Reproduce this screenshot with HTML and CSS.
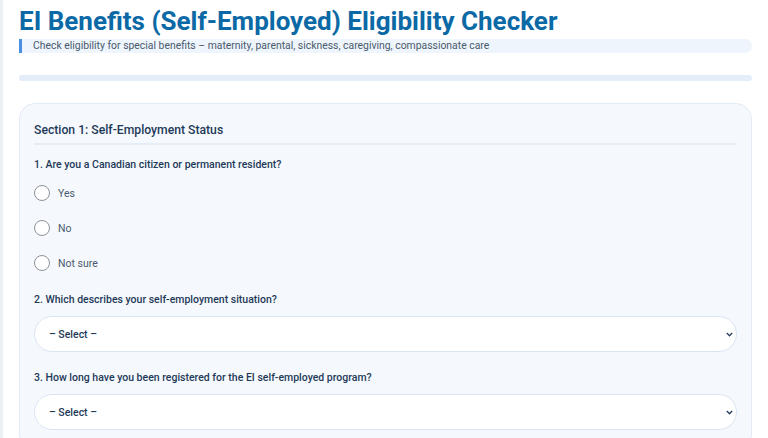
FILE: index.html
```html
<!DOCTYPE HTML>
<html>

<head>
    <meta charset="UTF-8">
    <title>EI Benefits (Self-Employed) Eligibility Checker</title>
    <link rel="stylesheet" href="styles.css">
</head>

<body>
    <div class="page">
        <h1 class="title">EI Benefits (Self-Employed) Eligibility Checker</h1>
        <p class="subtitle">Check eligibility for special benefits – maternity, parental, sickness, caregiving, compassionate care</p>

        <div class="progress"><div class="progress-fill" style="width: 0%"></div></div>

        <form class="card">
            <h2 class="section-title">Section 1: Self-Employment Status</h2>

            <div class="question">
                <label class="question-label">1. Are you a Canadian citizen or permanent resident?</label>
                <div class="options">
                    <label class="option"><input type="radio" name="resident" value="yes"><span>Yes</span></label>
                    <label class="option"><input type="radio" name="resident" value="no"><span>No</span></label>
                    <label class="option"><input type="radio" name="resident" value="unsure"><span>Not sure</span></label>
                </div>
            </div>

            <div class="question">
                <label class="question-label" for="situation">2. Which describes your self-employment situation?</label>
                <select id="situation" class="select">
                    <option>– Select –</option>
                    <option>Sole proprietor</option>
                    <option>Partner in a business</option>
                    <option>Incorporated, own more than 40% of shares</option>
                </select>
            </div>

            <div class="question">
                <label class="question-label" for="registered">3. How long have you been registered for the EI self-employed program?</label>
                <select id="registered" class="select">
                    <option>– Select –</option>
                    <option>Less than 12 months</option>
                    <option>12 months or more</option>
                </select>
            </div>
        </form>
    </div>
</body>

</html>
```

FILE: styles.css
```css
body {
    margin: 0;
    background-color: #eceff3;
    font-family: Roboto, "Noto Sans", Arial, sans-serif;
    color: #1f3a58;
}

.page {
    margin-left: 3px;
    min-height: 100vh;
    padding: 4px 16px 0 16px;
    background-color: #ffffff;
}

.title {
    margin: 0;
    font-size: 26px;
    line-height: 34px;
    font-weight: 700;
    color: #0b69a6;
}

.subtitle {
    margin: 1px 0 0 0;
    height: 14px;
    padding-left: 11px;
    border-left: 3px solid #4a90e2;
    border-radius: 0 7px 7px 0;
    background-color: #eef5fd;
    font-size: 10.4px;
    line-height: 14px;
    color: #4b5a6c;
}

.progress {
    margin-top: 22px;
    height: 6px;
    border-radius: 3px;
    background-color: #e4eefa;
    overflow: hidden;
}

.progress-fill {
    height: 100%;
    background-color: #4a90e2;
}

.card {
    margin-top: 22px;
    padding: 17px 14px 20px 14px;
    border: 1px solid #e2ebf5;
    border-radius: 16px;
    background-color: #f5f9fe;
}

.section-title {
    margin: 0;
    padding-bottom: 4px;
    border-bottom: 2px solid #e5edf6;
    font-size: 12.2px;
    line-height: 18px;
    font-weight: 500;
    color: #1f3a58;
}

.question {
    margin-top: 18px;
}

.question:first-of-type {
    margin-top: 12px;
}

.question-label {
    display: block;
    font-size: 10.5px;
    line-height: 16px;
    font-weight: 500;
    color: #1f3a58;
}

.options {
    margin-top: 12px;
    margin-bottom: 21px;
    display: flex;
    flex-direction: column;
    gap: 19px;
}

.option {
    display: flex;
    align-items: center;
    gap: 8px;
    height: 16px;
    font-size: 10.5px;
    color: #4b5a6c;
}

.option input {
    appearance: none;
    margin: 0;
    width: 16px;
    height: 16px;
    border: 1.5px solid #8c9299;
    border-radius: 50%;
    background-color: #ffffff;
}

/* pill select with a small chevron drawn as background */
.select {
    display: block;
    margin-top: 8px;
    width: 100%;
    height: 36px;
    padding: 0 16px 0 14px;
    appearance: none;
    border: 1.5px solid #d9e5f3;
    border-radius: 18px;
    background-color: #ffffff;
    background-image: url("data:image/svg+xml,%3Csvg xmlns='http://www.w3.org/2000/svg' width='7' height='5' viewBox='0 0 7 5'%3E%3Cpath d='M0.8 1 L3.5 3.8 L6.2 1' fill='none' stroke='%232c4260' stroke-width='1.4'/%3E%3C/svg%3E");
    background-repeat: no-repeat;
    background-position: right 3px center;
    background-size: 7px 5px;
    font-family: inherit;
    font-size: 10.5px;
    font-weight: 500;
    color: #1f3a58;
}
```
